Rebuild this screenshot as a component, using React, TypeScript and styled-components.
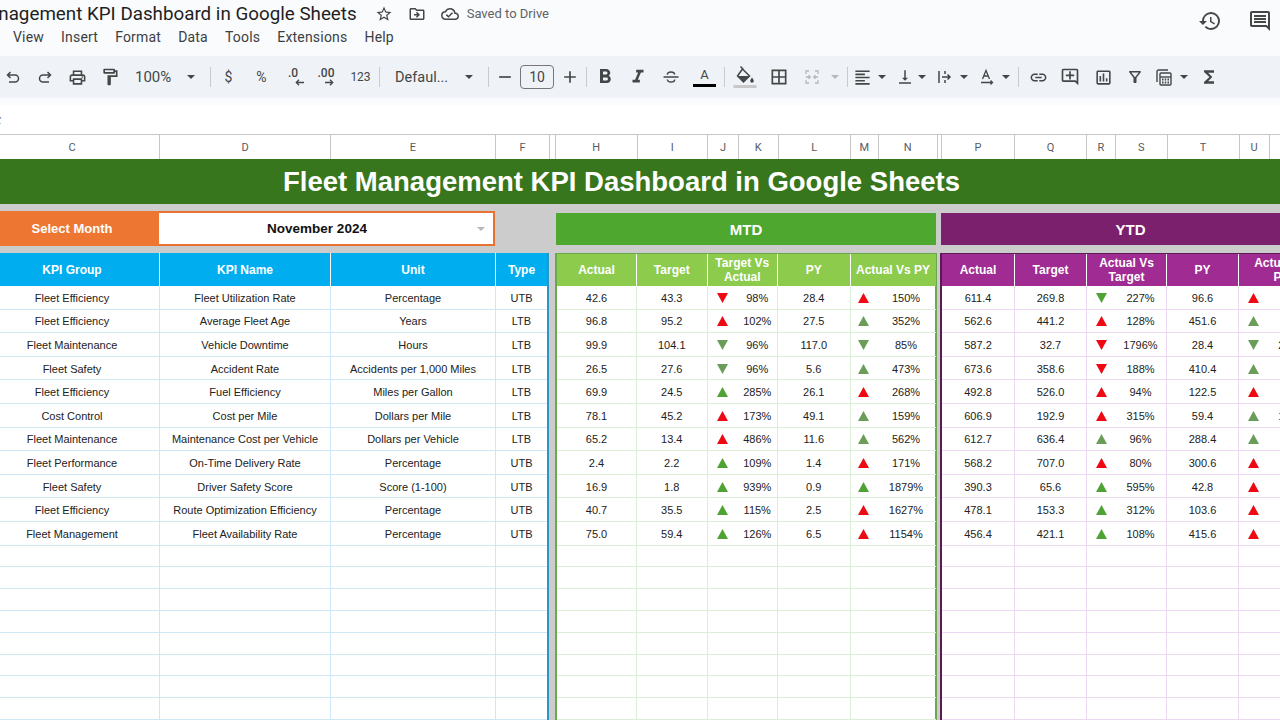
import { ReactNode } from "react"
import styled, { createGlobalStyle } from "styled-components"
import {
  MdAdd,
  MdFormatAlignLeft,
  MdFormatBold,
  MdFormatItalic,
  MdFunctions,
  MdHistory,
  MdLink,
  MdOutlineAddComment,
  MdOutlineAssessment,
  MdOutlineBorderAll,
  MdOutlineCloudDone,
  MdOutlineComment,
  MdOutlineDriveFileMove,
  MdOutlineFilterAlt,
  MdOutlineFormatPaint,
  MdOutlinePrint,
  MdOutlineStarBorder,
  MdRemove,
  MdVerticalAlignBottom,
} from "react-icons/md"

const GlobalStyle = createGlobalStyle`
  html, body {
    margin: 0;
    padding: 0;
    background: #f9fbfd;
  }
`

const Page = styled.div`
  width: 1280px;
  height: 720px;
  overflow: hidden;
  display: flex;
  flex-direction: column;
  background: #f9fbfd;
  font-family: "Liberation Sans", Arial, sans-serif;
`

const TopBar = styled.header`
  height: 56px;
  flex: none;
  display: flex;
  justify-content: space-between;
  font-family: Roboto, "Liberation Sans", sans-serif;
`

const TitleBlock = styled.div`
  display: flex;
  flex-direction: column;
`

const TitleRow = styled.div`
  height: 27px;
  display: flex;
  align-items: center;
  margin-left: -74px;
  color: #444746;
`

const DocTitle = styled.span`
  font-size: 18.8px;
  color: #1f1f1f;
  white-space: nowrap;
  margin-right: 17px;
`

const TitleIcon = styled.span<{ $w: number }>`
  width: ${(p) => p.$w}px;
  display: flex;
  justify-content: center;
  font-size: 18px;
`

const SavedLabel = styled.span`
  font-size: 13px;
  color: #5f6368;
  margin-left: 7px;
  white-space: nowrap;
`

const MenuBar = styled.nav`
  height: 20px;
  display: flex;
  align-items: center;
  gap: 17px;
  padding-left: 13px;
`

const MenuItem = styled.span`
  font-size: 14px;
  letter-spacing: 0.2px;
  color: #3c4043;
`

const SideIcons = styled.div`
  display: flex;
  align-items: center;
  gap: 26px;
  height: 42px;
  margin-right: 8px;
  font-size: 24px;
  color: #444746;
`

const Toolbar = styled.div`
  height: 42px;
  flex: none;
  display: flex;
  align-items: center;
  margin-left: -3px;
  background: #eff3f8;
  color: #444746;
  font-family: Roboto, "Liberation Sans", sans-serif;
`

const ToolButton = styled.span<{ $w?: number; $size?: number; $gap?: number; $muted?: boolean }>`
  width: ${(p) => p.$w ?? 32}px;
  height: 28px;
  flex: none;
  display: flex;
  align-items: center;
  justify-content: center;
  gap: ${(p) => p.$gap ?? 6}px;
  font-size: ${(p) => p.$size ?? 18}px;
  color: ${(p) => (p.$muted ? "#b4b8bb" : "#444746")};
`

const SelectTool = styled(ToolButton)<{ $pad: number }>`
  justify-content: space-between;
  font-size: ${(p) => p.$size ?? 14.5}px;
  padding: 0 14px 0 ${(p) => p.$pad}px;
  box-sizing: border-box;
`

const Divider = styled.span<{ $gap?: number }>`
  width: 1px;
  height: 20px;
  flex: none;
  margin: 0 ${(p) => p.$gap ?? 1}px;
  background: #c7cbd1;
`

const Caret = styled.span<{ $muted?: boolean }>`
  width: 0;
  height: 0;
  flex: none;
  border-left: 4px solid transparent;
  border-right: 4px solid transparent;
  border-top: 4px solid ${(p) => (p.$muted ? "#b4b8bb" : "#444746")};
`

const SizeBox = styled.span`
  width: 34px;
  height: 24px;
  flex: none;
  box-sizing: border-box;
  display: flex;
  align-items: center;
  justify-content: center;
  border: 1px solid #747775;
  border-radius: 4px;
  font-size: 14px;
`

const ColorGlyph = styled.span<{ $bar: string }>`
  width: 23px;
  display: flex;
  flex-direction: column;
  align-items: center;
  font-size: 13px;
  line-height: 14px;
  &::after {
    content: "";
    width: 100%;
    height: 3px;
    margin-top: 2px;
    background: ${(p) => p.$bar};
  }
`

const DecimalGlyph = styled.span`
  display: flex;
  flex-direction: column;
  align-items: flex-end;
  font-size: 12px;
  font-weight: 500;
  line-height: 11px;
`

const ArrowSvg = styled.svg<{ $shift: number }>`
  margin-right: ${(p) => p.$shift}px;
  fill: none;
  stroke: currentColor;
  stroke-width: 1.3;
`

const FormulaBar = styled.div`
  height: 29px;
  flex: none;
  margin-top: 7px;
  display: flex;
  align-items: center;
  background: #fff;
  font-family: "Liberation Serif", serif;
  font-style: italic;
  font-size: 14px;
  color: #70757a;
`

const FxLabel = styled.span`
  margin-left: -9px;
`

const ColumnHeaders = styled.div`
  height: 25px;
  flex: none;
  display: flex;
  margin-left: -15px;
  box-sizing: border-box;
  border-top: 1px solid #c7c7c7;
  background: #fff;
`

const ColLetter = styled.span<{ $w: number }>`
  width: ${(p) => p.$w}px;
  flex: none;
  box-sizing: border-box;
  display: flex;
  align-items: center;
  justify-content: center;
  border-right: 1px solid #c7c7c7;
  font-family: Roboto, "Liberation Sans", sans-serif;
  font-size: 11px;
  color: #575a5e;
`

const Sheet = styled.main`
  width: 1339px;
  flex: 1;
  margin-left: -15px;
  display: flex;
  flex-direction: column;
  background: #cccccc;
`

const TitleBand = styled.h1`
  height: 45px;
  flex: none;
  margin: 0;
  padding-right: 66px;
  display: flex;
  align-items: center;
  justify-content: center;
  background: #38761d;
  color: #fff;
  font-size: 27.5px;
  font-weight: 700;
`

const SelectorRow = styled.div`
  height: 49px;
  flex: none;
  display: flex;
  align-items: flex-start;
`

const SelectLabel = styled.div`
  width: 174px;
  height: 35px;
  margin-top: 7px;
  display: flex;
  align-items: center;
  justify-content: center;
  background: #ed7732;
  color: #fff;
  font-size: 13px;
  font-weight: 700;
`

const SelectBox = styled.div`
  width: 336px;
  height: 35px;
  margin-top: 7px;
  padding: 0 8px;
  box-sizing: border-box;
  display: flex;
  align-items: center;
  border: 2px solid #e97132;
  border-left: none;
  background: #fff;
  font-size: 13.5px;
  font-weight: 700;
  color: #111;
`

const SelectValue = styled.span`
  flex: 1;
  text-align: center;
  padding-right: 10px;
`

const PeriodBand = styled.div<{ $bg: string; $gap: number; $w: number }>`
  width: ${(p) => p.$w}px;
  height: 32px;
  margin: 9px 0 0 ${(p) => p.$gap}px;
  display: flex;
  align-items: center;
  justify-content: center;
  background: ${(p) => p.$bg};
  color: #fff;
  font-size: 15px;
  font-weight: 700;
`

const Tables = styled.div`
  flex: 1;
  display: flex;
  align-items: stretch;
`

const Panel = styled.section<{ $w: number; $gap?: number; $left?: string; $right?: string }>`
  width: ${(p) => p.$w}px;
  flex: none;
  box-sizing: border-box;
  margin-left: ${(p) => p.$gap ?? 0}px;
  background: #fff;
  border-top: ${(p) => (p.$left ? `1px solid ${p.$left}` : "none")};
  border-left: ${(p) => (p.$left ? `2px solid ${p.$left}` : "none")};
  border-right: ${(p) => (p.$right ? `2px solid ${p.$right}` : "none")};
`

const Row = styled.div<{ $cols: string; $h: number }>`
  display: grid;
  grid-template-columns: ${(p) => p.$cols};
  height: ${(p) => p.$h}px;
`

const HeadCell = styled.div<{ $bg: string }>`
  display: flex;
  align-items: center;
  justify-content: center;
  text-align: center;
  box-sizing: border-box;
  padding: 0 2px;
  background: ${(p) => p.$bg};
  border-right: 1px solid #fff;
  color: #fff;
  font-size: 12px;
  font-weight: 700;
  line-height: 14px;
  &:last-child {
    border-right: none;
  }
`

const Cell = styled.div<{ $line: string }>`
  display: flex;
  align-items: center;
  justify-content: center;
  box-sizing: border-box;
  padding-top: 1px;
  border-right: 1px solid ${(p) => p.$line};
  border-bottom: 1px solid ${(p) => p.$line};
  color: #222;
  font-size: 11px;
  white-space: nowrap;
  &:last-child {
    border-right: none;
  }
`

const DeltaCell = styled(Cell)<{ $tri: number }>`
  display: grid;
  grid-template-columns: ${(p) => p.$tri}px 1fr;
  justify-items: center;
  align-items: center;
`

const triangleTone = { R: "#ee0a12", G: "#4ea334", D: "#6a9e58" }

type Tone = keyof typeof triangleTone

const Triangle = ({ code }: { code: string }) => {
  const tone = triangleTone[code[0] as Tone]
  const points = code[1] === "^" ? "5.5,0 11,10 0,10" : "0,0 11,0 5.5,10"
  return (
    <svg width="11" height="10" viewBox="0 0 11 10">
      <polygon points={points} fill={tone} />
    </svg>
  )
}

const UndoIcon = () => (
  <svg width="18" height="18" viewBox="0 0 18 18" fill="none" stroke="currentColor" strokeWidth="1.5">
    <path d="M6.500 4 3.500 7l3 3M3.500 7H11a3.500 3.500 0 0 1 0 7H5" />
  </svg>
)

const RedoIcon = () => (
  <svg width="18" height="18" viewBox="0 0 18 18" fill="none" stroke="currentColor" strokeWidth="1.5">
    <path d="M11.500 4l3 3-3 3M14.500 7H7a3.500 3.500 0 0 0 0 7h6" />
  </svg>
)

const StrikeIcon = () => (
  <svg width="18" height="18" viewBox="0 0 18 18" fill="none" stroke="currentColor" strokeWidth="1.4">
    <path d="M1.500 9h15M5.300 6.800C5.300 4.800 7 4 9 4s3.500.9 3.700 2.500M5.300 11.500C5.500 13.300 7 14 9 14s3.700-.8 3.700-2.500" />
  </svg>
)

const FillIcon = () => (
  <svg width="24" height="24" viewBox="0 0 24 24">
    <path d="M7.500 1.500 10 4" fill="none" stroke="currentColor" strokeWidth="1.500" />
    <path d="M9.500 4 16.500 11 10.500 17 4.500 11z" fill="none" stroke="currentColor" strokeWidth="1.500" />
    <path d="M4.500 11h12l-6 6z" fill="currentColor" />
    <path d="M19 12.500c1 1.500 1.800 2.500 1.800 3.500a1.800 1.800 0 0 1-3.600 0c0-1 .8-2 1.800-3.500z" fill="currentColor" />
    <rect x="0.500" y="20" width="23" height="3" fill="#c8c8c8" />
  </svg>
)

const MergeIcon = () => (
  <svg width="18" height="18" viewBox="0 0 18 18" fill="none" stroke="currentColor" strokeWidth="1.3">
    <path d="M3 6V3h3M3 12v3h3M15 6V3h-3M15 12v3h-3M3 9h4M5.500 7.200 7.300 9l-1.800 1.800M15 9h-4M12.500 7.200 10.700 9l1.800 1.800" />
  </svg>
)

const OverflowIcon = () => (
  <svg width="18" height="18" viewBox="0 0 18 18" fill="none" stroke="currentColor" strokeWidth="1.5">
    <path d="M3 3v12M9 3v3M9 12v3M6 9h8M11.500 6.500 14 9l-2.500 2.500" />
  </svg>
)

const RotateIcon = () => (
  <svg width="18" height="18" viewBox="0 0 18 18" fill="none" stroke="currentColor" strokeWidth="1.3">
    <path d="M4.500 11 8 2.500 11.500 11M5.800 8h4.400M3 14.500h11.500M12.500 12.500l2 2-2 2" />
  </svg>
)

const CalcIcon = () => (
  <svg width="20" height="20" viewBox="0 0 20 20" fill="none" stroke="currentColor" strokeWidth="1.4">
    <path d="M3 15V4.500A1.500 1.500 0 0 1 4.500 3H14" />
    <rect x="6" y="6" width="11" height="12" rx="1" />
    <path d="M6 10h11" />
    <path d="M8 12.500h7M8 15.500h7" strokeDasharray="1.500 1.250" strokeWidth="1.800" />
  </svg>
)

const ArrowLeft = () => (
  <ArrowSvg $shift={-6} width="9" height="7" viewBox="0 0 9 7">
    <path d="M9 3.500H1.500M4 .8 1.300 3.500 4 6.200" />
  </ArrowSvg>
)

const ArrowRight = () => (
  <ArrowSvg $shift={0} width="9" height="7" viewBox="0 0 9 7">
    <path d="M0 3.500h7.500M5 .8l2.700 2.700L5 6.200" />
  </ArrowSvg>
)

const menuItems = ["View", "Insert", "Format", "Data", "Tools", "Extensions", "Help"]

const columnLetters: [string, number][] = [
  ["C", 175], ["D", 171], ["E", 165], ["F", 54], ["", 6], ["H", 81.5], ["I", 70.5],
  ["J", 31], ["K", 39.5], ["L", 72.5], ["M", 27.5], ["N", 59.5], ["", 4], ["P", 73],
  ["Q", 72], ["R", 29], ["S", 51.5], ["T", 72], ["U", 30], ["V", 60],
]

const leftColumns = "175px 171px 165px 51px"
const mtdColumns = "80px 70.500px 70.500px 72.500px 85px"
const ytdColumns = "73px 72px 80px 72px 85px"

const leftRows = [
  ["Fleet Efficiency", "Fleet Utilization Rate", "Percentage", "UTB"],
  ["Fleet Efficiency", "Average Fleet Age", "Years", "LTB"],
  ["Fleet Maintenance", "Vehicle Downtime", "Hours", "LTB"],
  ["Fleet Safety", "Accident Rate", "Accidents per 1,000 Miles", "LTB"],
  ["Fleet Efficiency", "Fuel Efficiency", "Miles per Gallon", "LTB"],
  ["Cost Control", "Cost per Mile", "Dollars per Mile", "LTB"],
  ["Fleet Maintenance", "Maintenance Cost per Vehicle", "Dollars per Vehicle", "LTB"],
  ["Fleet Performance", "On-Time Delivery Rate", "Percentage", "UTB"],
  ["Fleet Safety", "Driver Safety Score", "Score (1-100)", "UTB"],
  ["Fleet Efficiency", "Route Optimization Efficiency", "Percentage", "UTB"],
  ["Fleet Management", "Fleet Availability Rate", "Percentage", "UTB"],
]

// actual, target, arrow, pct, py, arrow, pct
const mtdRows = [
  ["42.6", "43.3", "Rv", "98%", "28.4", "R^", "150%"],
  ["96.8", "95.2", "R^", "102%", "27.5", "D^", "352%"],
  ["99.9", "104.1", "Dv", "96%", "117.0", "Dv", "85%"],
  ["26.5", "27.6", "Dv", "96%", "5.6", "D^", "473%"],
  ["69.9", "24.5", "G^", "285%", "26.1", "R^", "268%"],
  ["78.1", "45.2", "R^", "173%", "49.1", "D^", "159%"],
  ["65.2", "13.4", "R^", "486%", "11.6", "D^", "562%"],
  ["2.4", "2.2", "G^", "109%", "1.4", "R^", "171%"],
  ["16.9", "1.8", "G^", "939%", "0.9", "G^", "1879%"],
  ["40.7", "35.5", "G^", "115%", "2.5", "R^", "1627%"],
  ["75.0", "59.4", "G^", "126%", "6.5", "R^", "1154%"],
]

const ytdRows = [
  ["611.4", "269.8", "Gv", "227%", "96.6", "R^", "633%"],
  ["562.6", "441.2", "R^", "128%", "451.6", "D^", "125%"],
  ["587.2", "32.7", "Rv", "1796%", "28.4", "Dv", "2068%"],
  ["673.6", "358.6", "Rv", "188%", "410.4", "D^", "164%"],
  ["492.8", "526.0", "R^", "94%", "122.5", "R^", "402%"],
  ["606.9", "192.9", "R^", "315%", "59.4", "D^", "1022%"],
  ["612.7", "636.4", "D^", "96%", "288.4", "D^", "212%"],
  ["568.2", "707.0", "R^", "80%", "300.6", "R^", "189%"],
  ["390.3", "65.6", "G^", "595%", "42.8", "R^", "912%"],
  ["478.1", "153.3", "G^", "312%", "103.6", "R^", "461%"],
  ["456.4", "421.1", "G^", "108%", "415.6", "R^", "110%"],
]

const emptyRows = Array.from({ length: 8 }, (_, i) => i)

interface MetricPanelProps {
  width: number
  gap: number
  cols: string
  headBg: string
  line: string
  heads: ReactNode[]
  rows: string[][]
  left: string
  right?: string
  tri: [number, number]
}

const MetricPanel = ({ width, gap, cols, headBg, line, heads, rows, left, right, tri }: MetricPanelProps) => (
  <Panel $w={width} $gap={gap} $left={left} $right={right}>
    <Row $cols={cols} $h={32}>
      {heads.map((head, i) => (
        <HeadCell key={i} $bg={headBg}>{head}</HeadCell>
      ))}
    </Row>
    {rows.map((r) => (
      <Row key={r[0]} $cols={cols} $h={23.6}>
        <Cell $line={line}>{r[0]}</Cell>
        <Cell $line={line}>{r[1]}</Cell>
        <DeltaCell $line={line} $tri={tri[0]}>
          <Triangle code={r[2]} />
          <span>{r[3]}</span>
        </DeltaCell>
        <Cell $line={line}>{r[4]}</Cell>
        <DeltaCell $line={line} $tri={tri[1]}>
          <Triangle code={r[5]} />
          <span>{r[6]}</span>
        </DeltaCell>
      </Row>
    ))}
    {emptyRows.map((i) => (
      <Row key={i} $cols={cols} $h={21.8}>
        {heads.map((_, j) => (
          <Cell key={j} $line={line} />
        ))}
      </Row>
    ))}
  </Panel>
)

const App = () => {
  return (
    <Page>
      <GlobalStyle />
      <TopBar>
        <TitleBlock>
          <TitleRow>
            <DocTitle>Fleet Management KPI Dashboard in Google Sheets</DocTitle>
            <TitleIcon $w={20}><MdOutlineStarBorder /></TitleIcon>
            <TitleIcon $w={46}><MdOutlineDriveFileMove /></TitleIcon>
            <TitleIcon $w={20}><MdOutlineCloudDone /></TitleIcon>
            <SavedLabel>Saved to Drive</SavedLabel>
          </TitleRow>
          <MenuBar>
            {menuItems.map((item) => (
              <MenuItem key={item}>{item}</MenuItem>
            ))}
          </MenuBar>
        </TitleBlock>
        <SideIcons>
          <MdHistory />
          <MdOutlineComment />
        </SideIcons>
      </TopBar>

      <Toolbar>
        <ToolButton><UndoIcon /></ToolButton>
        <ToolButton><RedoIcon /></ToolButton>
        <ToolButton $w={33} $size={19}><MdOutlinePrint /></ToolButton>
        <ToolButton $size={20}><MdOutlineFormatPaint /></ToolButton>
        <SelectTool $w={83} $pad={9} $size={15}>100%<Caret /></SelectTool>
        <Divider />
        <ToolButton $w={33} $size={14}>$</ToolButton>
        <ToolButton $w={33} $size={14}>%</ToolButton>
        <ToolButton $w={30}><DecimalGlyph>.0<ArrowLeft /></DecimalGlyph></ToolButton>
        <ToolButton $w={36}><DecimalGlyph>.00<ArrowRight /></DecimalGlyph></ToolButton>
        <ToolButton $w={33} $size={12}>123</ToolButton>
        <Divider $gap={2} />
        <SelectTool $w={105} $pad={13}>Defaul...<Caret /></SelectTool>
        <Divider />
        <ToolButton $w={30} $size={20}><MdRemove /></ToolButton>
        <SizeBox>10</SizeBox>
        <ToolButton $w={31} $size={20}><MdAdd /></ToolButton>
        <Divider />
        <ToolButton $w={34} $size={24}><MdFormatBold /></ToolButton>
        <ToolButton $size={22}><MdFormatItalic /></ToolButton>
        <ToolButton $w={34}><StrikeIcon /></ToolButton>
        <ToolButton $w={33}><ColorGlyph $bar="#000">A</ColorGlyph></ToolButton>
        <Divider $gap={3} />
        <ToolButton $w={34}><FillIcon /></ToolButton>
        <ToolButton $w={34} $size={20}><MdOutlineBorderAll /></ToolButton>
        <ToolButton $w={50} $gap={10} $muted><MergeIcon /><Caret $muted /></ToolButton>
        <Divider />
        <ToolButton $w={40} $size={19}><MdFormatAlignLeft /><Caret /></ToolButton>
        <ToolButton $w={44} $gap={4}><MdVerticalAlignBottom /><Caret /></ToolButton>
        <ToolButton $w={38}><OverflowIcon /><Caret /></ToolButton>
        <ToolButton $w={46}><RotateIcon /><Caret /></ToolButton>
        <Divider />
        <ToolButton $w={36} $size={19}><MdLink /></ToolButton>
        <ToolButton $w={28} $size={20}><MdOutlineAddComment /></ToolButton>
        <ToolButton $w={38} $size={19}><MdOutlineAssessment /></ToolButton>
        <ToolButton $w={26}><MdOutlineFilterAlt /></ToolButton>
        <ToolButton $w={46}><CalcIcon /><Caret /></ToolButton>
        <ToolButton $w={30} $size={20}><MdFunctions /></ToolButton>
      </Toolbar>

      <FormulaBar><FxLabel>fx</FxLabel></FormulaBar>

      <ColumnHeaders>
        {columnLetters.map(([letter, w], i) => (
          <ColLetter key={i} $w={w}>{letter}</ColLetter>
        ))}
      </ColumnHeaders>

      <Sheet>
        <TitleBand>Fleet Management KPI Dashboard in Google Sheets</TitleBand>
        <SelectorRow>
          <SelectLabel>Select Month</SelectLabel>
          <SelectBox>
            <SelectValue>November 2024</SelectValue>
            <Caret $muted />
          </SelectBox>
          <PeriodBand $bg="#4ea72e" $gap={61} $w={380}>MTD</PeriodBand>
          <PeriodBand $bg="#7a206d" $gap={5} $w={379}>YTD</PeriodBand>
        </SelectorRow>
        <Tables>
          <Panel $w={564} $right="#2b96c6">
            <Row $cols={leftColumns} $h={33}>
              {["KPI Group", "KPI Name", "Unit", "Type"].map((head) => (
                <HeadCell key={head} $bg="#00aeef">{head}</HeadCell>
              ))}
            </Row>
            {leftRows.map((r) => (
              <Row key={r[1]} $cols={leftColumns} $h={23.6}>
                {r.map((value, i) => (
                  <Cell key={i} $line="#cfe8f5">{value}</Cell>
                ))}
              </Row>
            ))}
            {emptyRows.map((i) => (
              <Row key={i} $cols={leftColumns} $h={21.8}>
                {[0, 1, 2, 3].map((j) => (
                  <Cell key={j} $line="#cfe8f5" />
                ))}
              </Row>
            ))}
          </Panel>
          <MetricPanel
            width={382}
            gap={6}
            cols={mtdColumns}
            headBg="#8ccb4c"
            line="#dcefd6"
            heads={["Actual", "Target", <>Target Vs<br />Actual</>, "PY", "Actual Vs PY"]}
            rows={mtdRows}
            left="#6aa84f"
            right="#6aa84f"
            tri={[30, 26]}
          />
          <MetricPanel
            width={383}
            gap={3}
            cols={ytdColumns}
            headBg="#a02b93"
            line="#eed7f2"
            heads={["Actual", "Target", <>Actual Vs<br />Target</>, "PY", <>Actual Vs<br />PY</>]}
            rows={ytdRows}
            left="#5b1a54"
            tri={[28, 28]}
          />
        </Tables>
      </Sheet>
    </Page>
  )
}

export default App
